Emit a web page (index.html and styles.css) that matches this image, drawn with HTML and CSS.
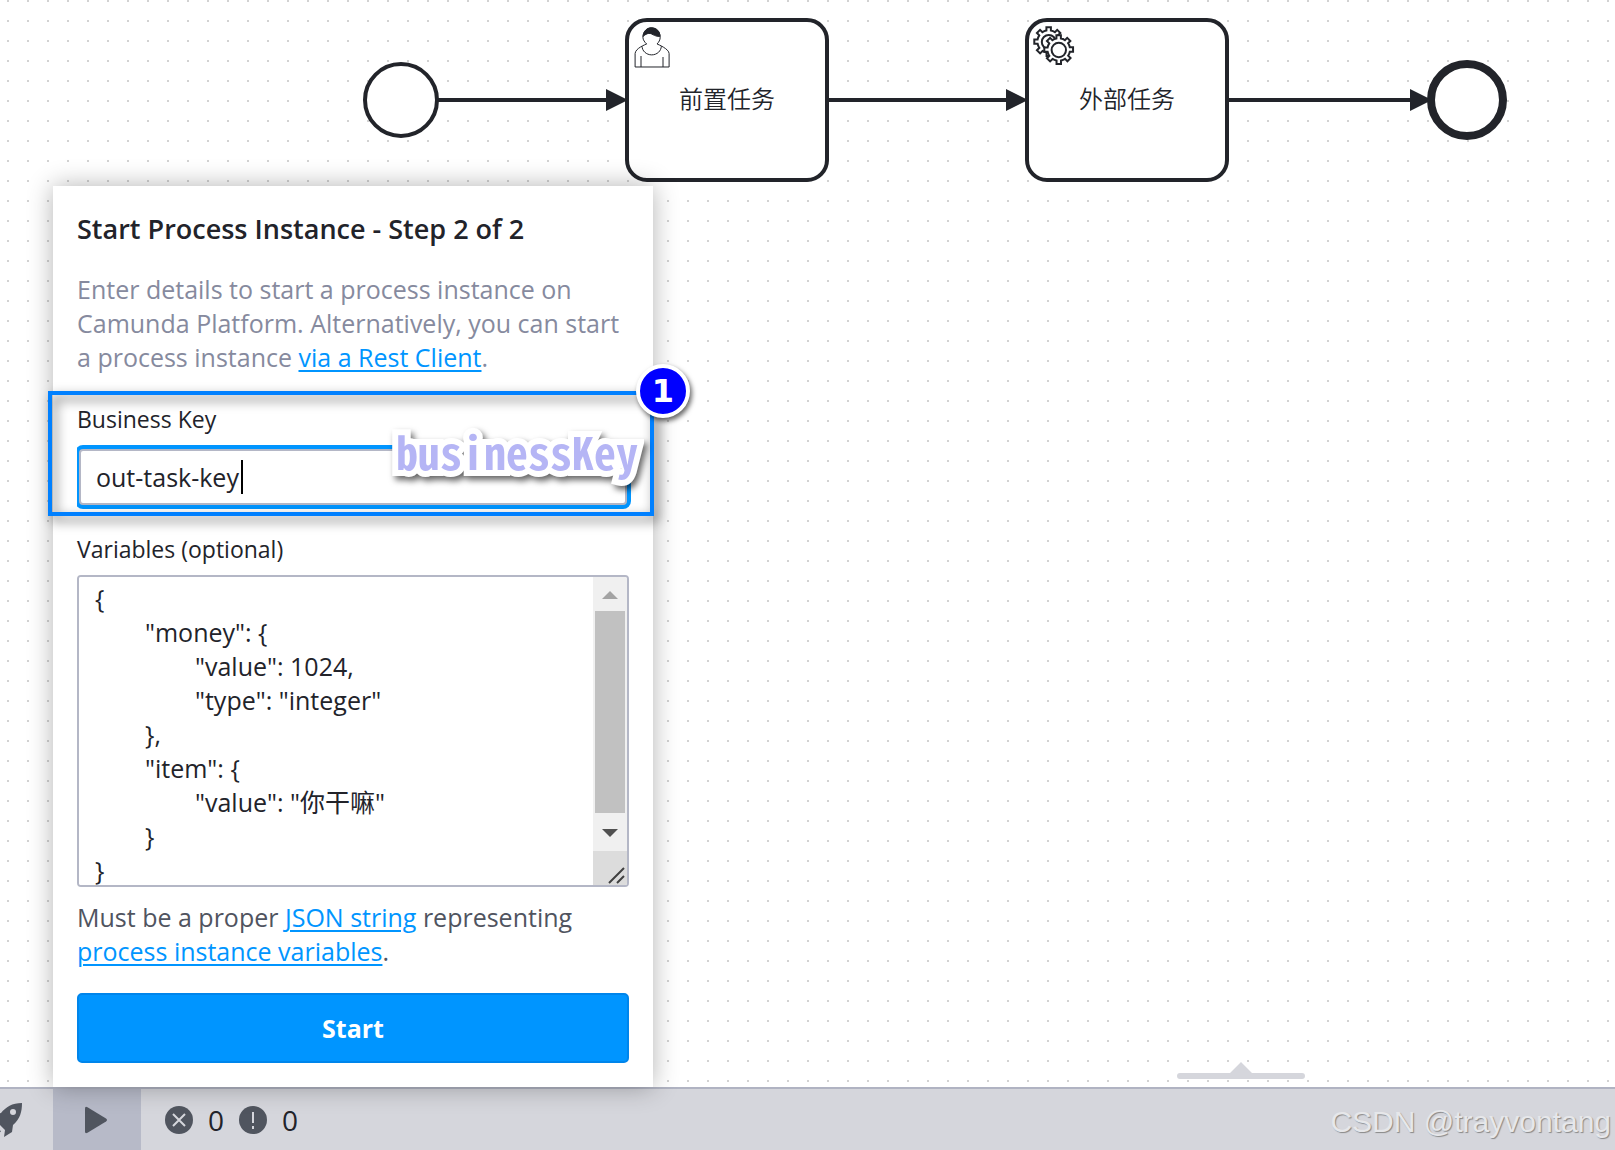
FILE: index.html
```html
<!DOCTYPE html>
<html lang="en">
<head>
<meta charset="utf-8">
<title>Start Process Instance</title>
<link rel="stylesheet" href="styles.css">
</head>
<body>
<main class="canvas">
  <svg class="diagram" width="1540" height="200" viewBox="0 0 1540 200" role="img" aria-label="Process diagram">
    <defs>
      <path id="gear" d="m 0,0 v -1.71335 c 0.352326,-0.0705 0.703932,-0.17838 1.047628,-0.32133 0.344416,-0.14465 0.665822,-0.32133 0.966377,-0.52145 l 1.19431,1.18005 1.567487,-1.57688 -1.195028,-1.18014 c 0.403376,-0.61394 0.683079,-1.29908 0.825447,-2.01824 l 1.622133,-0.01 v -2.2196 l -1.636514,0.01 c -0.07333,-0.35153 -0.178319,-0.70024 -0.323564,-1.04372 -0.145244,-0.34406 -0.321407,-0.6644 -0.522735,-0.96217 l 1.131035,-1.13631 -1.583305,-1.56293 -1.129598,1.13589 c -0.614052,-0.40108 -1.302883,-0.68093 -2.022633,-0.82247 l 0.0093,-1.61852 h -2.241173 l 0.0042,1.63124 c -0.353763,0.0736 -0.705369,0.17977 -1.049785,0.32371 -0.344415,0.14437 -0.665102,0.32092 -0.9635006,0.52006 l -1.1698628,-1.15823 -1.5667691,1.5792 1.1684265,1.15669 c -0.4026573,0.61283 -0.68308,1.29797 -0.8247287,2.01713 l -1.6588041,0.003 v 2.22174 l 1.6724648,-0.006 c 0.073327,0.35077 0.1797598,0.70243 0.3242851,1.04472 0.1452428,0.34448 0.3214064,0.6644 0.5227339,0.96066 l -1.1993431,1.19723 1.5840256,1.56011 1.1964668,-1.19348 c 0.6140517,0.40346 1.3028827,0.68232 2.0233517,0.82331 l 0.000719,1.69892 z"/>
      <path id="arrow" d="M-21 -11 L1 0 L-21 11 Z"/>
    </defs>
    <g class="flow">
      <path d="M438 100H610M828 100H1010M1228 100H1414"/>
    </g>
    <g class="shape">
      <circle cx="401" cy="100" r="36"/>
      <rect x="627" y="20" width="200" height="160" rx="20"/>
      <rect x="1027" y="20" width="200" height="160" rx="20"/>
      <circle class="end" cx="1467" cy="100" r="36"/>
    </g>
    <g class="head">
      <use href="#arrow" x="627" y="100"/>
      <use href="#arrow" x="1027" y="100"/>
      <use href="#arrow" x="1431" y="100"/>
    </g>
    <g class="user" transform="translate(627 20) scale(2)">
      <path d="m 15,12 c 0.909,-0.845 1.594,-2.049 1.594,-3.385 0,-2.554 -1.805,-4.622 -4.357,-4.622 -2.552,0 -4.288,2.068 -4.288,4.622 0,1.348 0.974,2.562 1.896,3.405 -0.529,0.187 -5.669,2.097 -5.794,4.756 v 6.718 h 17 v -6.718 c 0,-2.298 -5.528,-4.595 -6.051,-4.776 z m -8,6 l 0,5.5 m 11,0 l 0,-5"/>
      <path d="m 15,12 m 2.162,1.009 c 0,2.447 -2.158,4.431 -4.821,4.431 -2.665,0 -4.822,-1.981 -4.822,-4.431"/>
      <path class="hair" d="m 15,12 m -6.9,-3.8 c 0,0 2.251,-2.358 4.274,-1.177 2.024,1.181 4.221,1.537 4.124,0.965 -0.098,-0.57 -0.117,-3.791 -4.191,-4.136 -3.572,0.001 -4.208,3.367 -4.207,4.348 z"/>
    </g>
    <g class="service" transform="translate(1027 20) scale(2)">
      <use href="#gear" x="12" y="18"/>
      <circle cx="10.9" cy="11" r="3.5"/>
      <use href="#gear" x="17" y="22"/>
      <circle cx="15.9" cy="15" r="3.6"/>
    </g>
    <text class="task-name" x="727" y="108">前置任务</text>
    <text class="task-name" x="1127" y="108">外部任务</text>
  </svg>
  <svg class="drag-handle" width="128" height="18" viewBox="0 0 128 18" aria-hidden="true"><path d="M3 12H53L64 1L75 12H125a3 3 0 0 1 0 6H3a3 3 0 0 1 0-6Z"/></svg>
</main>

<form class="panel">
  <h1 class="title">Start Process Instance - Step 2 of 2</h1>
  <p class="intro">Enter details to start a process instance on Camunda Platform. Alternatively, you can start a process instance <a href="#rest">via a Rest Client</a>.</p>
  <label class="label" for="key">Business Key</label>
  <div class="key-field"><input class="key-input" id="key" type="text" value="out-task-key"><span class="caret"></span></div>
  <label class="label" for="vars">Variables (optional)</label>
  <div class="vars">
    <textarea class="vars-input" id="vars" rows="9" spellcheck="false">{
	"money": {
		"value": 1024,
		"type": "integer"
	},
	"item": {
		"value": "你干嘛"
	}
}</textarea>
    <div class="scrollbar" aria-hidden="true">
      <svg class="scroll-up" width="34" height="34" viewBox="0 0 34 34"><path d="M9 22L17 14L25 22Z"/></svg>
      <div class="thumb"></div>
      <svg class="scroll-down" width="34" height="38" viewBox="0 0 34 38"><path d="M9 16H25L17 24Z"/></svg>
      <svg class="grip" width="34" height="34" viewBox="0 0 34 34"><path d="M16 32L31 17M24 32L31 25"/></svg>
    </div>
  </div>
  <p class="help">Must be a proper <a href="#json">JSON string</a> representing <a href="#variables">process instance variables</a>.</p>
  <button class="start" type="button">Start</button>
  <div class="frame"></div>
  <span class="badge">1</span>
  <span class="note">businessKey</span>
</form>

<footer class="statusbar">
  <button class="tool deploy" type="button" aria-label="Deploy">
    <svg width="34" height="36" viewBox="0 0 34 36"><path fill-rule="evenodd" d="M33 1C23 1 17 5 12 11L5 12L0 20L8 20L16 28L15 35L23 30L24 23C31 17 33 10 33 1ZM24 7a3 3 0 1 1 0 6a3 3 0 0 1 0-6Z"/><path d="M6 22C3 24 2 28 2 33C7 33 10 32 12 29L10 28L9 29L7 27L9 26Z"/></svg>
  </button>
  <button class="tool run" type="button" aria-label="Start process instance">
    <svg width="24" height="28" viewBox="0 0 24 28"><path d="M1 2.500Q1 0 3.500 1.300L22 12.500Q24 14 22 15.500L3.500 26.700Q1 28 1 25.500Z"/></svg>
  </button>
  <button class="log" type="button">
    <svg width="28" height="28" viewBox="0 0 28 28"><circle cx="14" cy="14" r="14"/><path class="mark" d="M8 8L20 20M20 8L8 20"/></svg>
    <span class="count">0</span>
    <svg width="28" height="28" viewBox="0 0 28 28"><circle cx="14" cy="14" r="14"/><path class="mark" d="M14 6V17M14 20V23"/></svg>
    <span class="count">0</span>
  </button>
  <span class="watermark">CSDN @trayvontang</span>
</footer>
</body>
</html>
```
FILE: styles.css
```css
* { box-sizing: border-box; }

body {
  position: relative;
  display: flex;
  flex-direction: column;
  min-height: 100vh;
  margin: 0;
  overflow-x: hidden;
  font-family: "Open Sans", "Noto Sans CJK SC", sans-serif;
  color: #22232a;
}

button, input, textarea { font: inherit; color: inherit; }

/* Diagram */
.canvas {
  position: relative;
  flex: 1;
  background: #fff radial-gradient(circle at 8px 1px, #d2d2d2 1px, transparent 1px) 0 0 / 20px 20px;
}
.diagram { display: block; }
.flow { fill: none; stroke: #22242a; stroke-width: 4; }
.shape { fill: #fff; stroke: #22242a; stroke-width: 4; }
.shape .end { stroke-width: 8; }
.head { fill: #22242a; }
.user { fill: #fff; stroke: #22242a; stroke-width: 0.5; }
.user .hair { fill: #22242a; }
.service { fill: #fff; stroke: #22242a; stroke-width: 1; }
.task-name {
  font: 350 24px "Noto Sans CJK SC", sans-serif;
  text-anchor: middle;
  fill: #22242a;
}
.drag-handle {
  position: absolute;
  right: 310px;
  bottom: 8px;
  fill: #d5d6dc;
}

/* Start instance popup */
.panel {
  position: absolute;
  left: 53px;
  bottom: 63px;
  z-index: 1;
  display: flex;
  flex-direction: column;
  width: 600px;
  padding: 24px;
  background: #fff;
  box-shadow: 0 0 24px rgba(0, 0, 0, 0.3);
}
.title {
  margin: 0 0 24px;
  font-size: 27px;
  font-weight: 600;
  line-height: 38px;
}
.intro, .help { margin: 0; font-size: 25px; line-height: 34px; }
.intro { margin-bottom: 28px; color: #868a9e; }
.help { margin: 13px 0 25px; color: #50545f; }
a { color: #0095ff; text-decoration-thickness: 2px; text-underline-offset: 3px; }
.label { font-size: 23px; line-height: 34px; margin-bottom: 9px; }
.key-field {
  position: relative;
  margin-bottom: 23px;
  padding: 4px 2px;
}
.key-input {
  display: block;
  width: 100%;
  height: 56px;
  padding: 0 15px;
  border: 2px solid #b4b7c6;
  border-radius: 4px;
  outline: 0;
  box-shadow: 0 0 0 4px #0095ff;
  clip-path: inset(-4px -4px -4px -2px);
  font-size: 25px;
}
.caret {
  position: absolute;
  left: 164px;
  top: 15px;
  width: 2px;
  height: 34px;
  background: #000;
}
.vars {
  display: flex;
  overflow: hidden;
  border: 2px solid #b4b7c6;
  border-radius: 4px;
}
.vars-input {
  flex: 1;
  min-width: 0;
  height: 308px;
  padding: 4px 16px 0;
  border: 0;
  outline: 0;
  resize: none;
  overflow: hidden;
  font-size: 25px;
  line-height: 34px;
  tab-size: 50px;
}
.scrollbar {
  display: flex;
  flex-direction: column;
  width: 34px;
  background: #f0f0f0;
}
.thumb { flex: 1; margin: 0 2px; background: #c1c1c1; }
.scroll-up { fill: #a3a3a3; }
.scroll-down { fill: #505050; }
.grip { background: #dcdcdc; fill: none; stroke: #404040; stroke-width: 2; }
.start {
  height: 70px;
  border: 2px solid #0085eb;
  border-radius: 5px;
  background: #0095ff;
  color: #fff;
  font-size: 25px;
  font-weight: 700;
}

/* Annotations over the popup */
.frame {
  position: absolute;
  left: -5px;
  top: 205px;
  width: 606px;
  height: 125px;
  border: 4px solid #0080ff;
  filter: drop-shadow(4px 5px 6px rgba(0, 0, 0, 0.6));
  pointer-events: none;
}
.badge {
  position: absolute;
  left: 583px;
  top: 178px;
  display: grid;
  place-items: center;
  width: 54px;
  height: 54px;
  border: 4px solid #fff;
  border-radius: 50%;
  background: #00f;
  box-shadow: 2px 3px 5px rgba(0, 0, 0, 0.6);
  color: #fff;
  font: bold 32px/1 "DejaVu Sans", sans-serif;
}
.note {
  position: absolute;
  left: 343px;
  top: 241px;
  color: #b5b5f5;
  font: 700 44px/48px "Noto Sans CJK SC", sans-serif;
  font-feature-settings: "hwid";
  paint-order: stroke fill;
  -webkit-text-stroke: 12px #fff;
  stroke-linejoin: round;
  filter: drop-shadow(3px 4px 3px rgba(0, 0, 0, 0.6));
}

/* Status bar */
.statusbar {
  display: flex;
  height: 63px;
  border-top: 2px solid #b0b3c2;
  background: #d5d6dc;
}
.statusbar button { border: 0; background: none; padding: 0; fill: #50555f; }
.statusbar .tool { display: flex; align-items: center; }
.statusbar .deploy { width: 53px; margin-left: -11px; margin-right: 11px; }
.statusbar .run { width: 88px; padding-left: 31px; background: #b7bac8; }
.statusbar .log {
  display: flex;
  align-items: center;
  gap: 15px;
  padding: 0 24px;
  font: 28px "Open Sans", sans-serif;
}
.mark { fill: none; stroke: #d5d6dc; stroke-width: 2; }
.watermark {
  margin-left: auto;
  padding-right: 4px;
  color: #e6e7ea;
  font: 30px/66px "Liberation Sans", sans-serif;
  text-shadow: 1px 1px 1px #888;
}
```
